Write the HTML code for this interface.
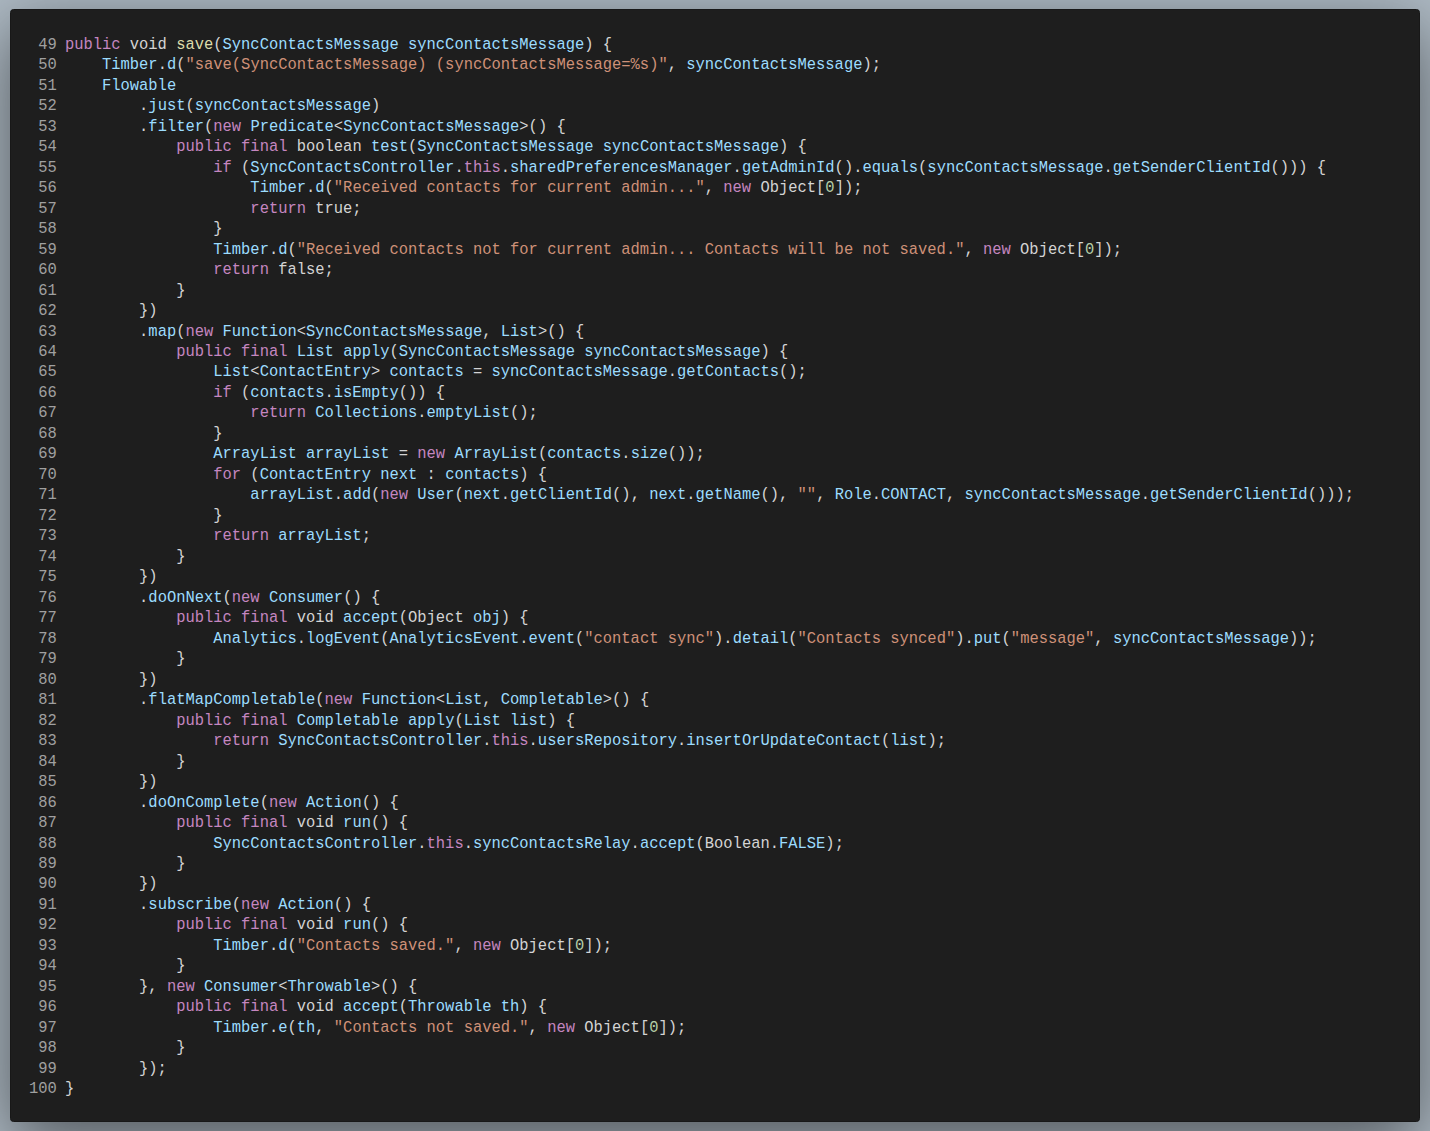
<!DOCTYPE html>
<html><head><meta charset="utf-8"><style>
html,body{margin:0;padding:0;width:1430px;height:1131px;overflow:hidden}
body{background:#aebac4;position:relative}
.p{position:absolute;left:10px;top:9px;width:1410px;height:1113px;box-sizing:border-box;background:#1e1e1e;border:1px solid #181818;border-radius:3.5px;box-shadow:0 20px 68px rgba(0,0,0,0.55)}
.code{position:absolute;left:0;top:34.8px;font-family:"Liberation Mono",monospace;font-size:15.464px;line-height:20.48px;color:#d4d4d4;white-space:pre}
.r{position:absolute;left:0;width:1400px;height:20.48px;white-space:pre;transform:scaleY(1.05);transform-origin:0 14.35px}
.g{position:absolute;left:-3.200000000000003px;width:60px;text-align:right;color:#a0a0a0}
.c{position:absolute;left:64.9px}
i{font-style:normal}
.k{color:#c586c0} .v{color:#9cdcfe} .s{color:#ce9178} .n{color:#b5cea8} .f{color:#dcdcaa}
</style></head>
<body><div class="p"></div><div class="code">
<div class="r" style="top:0.00px"><span class="g">49</span><span class="c"><i class="k">public</i> void <i class="f">save</i>(<i class="v">SyncContactsMessage</i> <i class="v">syncContactsMessage</i>) {</span></div>
<div class="r" style="top:20.48px"><span class="g">50</span><span class="c">    <i class="v">Timber</i>.<i class="v">d</i>(<i class="s">&quot;save(SyncContactsMessage) (syncContactsMessage=%s)&quot;</i>, <i class="v">syncContactsMessage</i>);</span></div>
<div class="r" style="top:40.96px"><span class="g">51</span><span class="c">    <i class="v">Flowable</i></span></div>
<div class="r" style="top:61.44px"><span class="g">52</span><span class="c">        .<i class="v">just</i>(<i class="v">syncContactsMessage</i>)</span></div>
<div class="r" style="top:81.92px"><span class="g">53</span><span class="c">        .<i class="v">filter</i>(<i class="k">new</i> <i class="v">Predicate</i>&lt;<i class="v">SyncContactsMessage</i>&gt;() {</span></div>
<div class="r" style="top:102.40px"><span class="g">54</span><span class="c">            <i class="k">public</i> <i class="k">final</i> boolean <i class="v">test</i>(<i class="v">SyncContactsMessage</i> <i class="v">syncContactsMessage</i>) {</span></div>
<div class="r" style="top:122.88px"><span class="g">55</span><span class="c">                <i class="k">if</i> (<i class="v">SyncContactsController</i>.<i class="k">this</i>.<i class="v">sharedPreferencesManager</i>.<i class="v">getAdminId</i>().<i class="v">equals</i>(<i class="v">syncContactsMessage</i>.<i class="v">getSenderClientId</i>())) {</span></div>
<div class="r" style="top:143.36px"><span class="g">56</span><span class="c">                    <i class="v">Timber</i>.<i class="v">d</i>(<i class="s">&quot;Received contacts for current admin...&quot;</i>, <i class="k">new</i> Object[<i class="n">0</i>]);</span></div>
<div class="r" style="top:163.84px"><span class="g">57</span><span class="c">                    <i class="k">return</i> true;</span></div>
<div class="r" style="top:184.32px"><span class="g">58</span><span class="c">                }</span></div>
<div class="r" style="top:204.80px"><span class="g">59</span><span class="c">                <i class="v">Timber</i>.<i class="v">d</i>(<i class="s">&quot;Received contacts not for current admin... Contacts will be not saved.&quot;</i>, <i class="k">new</i> Object[<i class="n">0</i>]);</span></div>
<div class="r" style="top:225.28px"><span class="g">60</span><span class="c">                <i class="k">return</i> false;</span></div>
<div class="r" style="top:245.76px"><span class="g">61</span><span class="c">            }</span></div>
<div class="r" style="top:266.24px"><span class="g">62</span><span class="c">        })</span></div>
<div class="r" style="top:286.72px"><span class="g">63</span><span class="c">        .<i class="v">map</i>(<i class="k">new</i> <i class="v">Function</i>&lt;<i class="v">SyncContactsMessage</i>, <i class="v">List</i>&gt;() {</span></div>
<div class="r" style="top:307.20px"><span class="g">64</span><span class="c">            <i class="k">public</i> <i class="k">final</i> <i class="v">List</i> <i class="v">apply</i>(<i class="v">SyncContactsMessage</i> <i class="v">syncContactsMessage</i>) {</span></div>
<div class="r" style="top:327.68px"><span class="g">65</span><span class="c">                <i class="v">List</i>&lt;<i class="v">ContactEntry</i>&gt; <i class="v">contacts</i> = <i class="v">syncContactsMessage</i>.<i class="v">getContacts</i>();</span></div>
<div class="r" style="top:348.16px"><span class="g">66</span><span class="c">                <i class="k">if</i> (<i class="v">contacts</i>.<i class="v">isEmpty</i>()) {</span></div>
<div class="r" style="top:368.64px"><span class="g">67</span><span class="c">                    <i class="k">return</i> <i class="v">Collections</i>.<i class="v">emptyList</i>();</span></div>
<div class="r" style="top:389.12px"><span class="g">68</span><span class="c">                }</span></div>
<div class="r" style="top:409.60px"><span class="g">69</span><span class="c">                <i class="v">ArrayList</i> <i class="v">arrayList</i> = <i class="k">new</i> <i class="v">ArrayList</i>(<i class="v">contacts</i>.<i class="v">size</i>());</span></div>
<div class="r" style="top:430.08px"><span class="g">70</span><span class="c">                <i class="k">for</i> (<i class="v">ContactEntry</i> <i class="v">next</i> : <i class="v">contacts</i>) {</span></div>
<div class="r" style="top:450.56px"><span class="g">71</span><span class="c">                    <i class="v">arrayList</i>.<i class="v">add</i>(<i class="k">new</i> <i class="v">User</i>(<i class="v">next</i>.<i class="v">getClientId</i>(), <i class="v">next</i>.<i class="v">getName</i>(), <i class="s">&quot;&quot;</i>, <i class="v">Role</i>.<i class="v">CONTACT</i>, <i class="v">syncContactsMessage</i>.<i class="v">getSenderClientId</i>()));</span></div>
<div class="r" style="top:471.04px"><span class="g">72</span><span class="c">                }</span></div>
<div class="r" style="top:491.52px"><span class="g">73</span><span class="c">                <i class="k">return</i> <i class="v">arrayList</i>;</span></div>
<div class="r" style="top:512.00px"><span class="g">74</span><span class="c">            }</span></div>
<div class="r" style="top:532.48px"><span class="g">75</span><span class="c">        })</span></div>
<div class="r" style="top:552.96px"><span class="g">76</span><span class="c">        .<i class="v">doOnNext</i>(<i class="k">new</i> <i class="v">Consumer</i>() {</span></div>
<div class="r" style="top:573.44px"><span class="g">77</span><span class="c">            <i class="k">public</i> <i class="k">final</i> void <i class="v">accept</i>(Object <i class="v">obj</i>) {</span></div>
<div class="r" style="top:593.92px"><span class="g">78</span><span class="c">                <i class="v">Analytics</i>.<i class="v">logEvent</i>(<i class="v">AnalyticsEvent</i>.<i class="v">event</i>(<i class="s">&quot;contact sync&quot;</i>).<i class="v">detail</i>(<i class="s">&quot;Contacts synced&quot;</i>).<i class="v">put</i>(<i class="s">&quot;message&quot;</i>, <i class="v">syncContactsMessage</i>));</span></div>
<div class="r" style="top:614.40px"><span class="g">79</span><span class="c">            }</span></div>
<div class="r" style="top:634.88px"><span class="g">80</span><span class="c">        })</span></div>
<div class="r" style="top:655.36px"><span class="g">81</span><span class="c">        .<i class="v">flatMapCompletable</i>(<i class="k">new</i> <i class="v">Function</i>&lt;<i class="v">List</i>, <i class="v">Completable</i>&gt;() {</span></div>
<div class="r" style="top:675.84px"><span class="g">82</span><span class="c">            <i class="k">public</i> <i class="k">final</i> <i class="v">Completable</i> <i class="v">apply</i>(<i class="v">List</i> <i class="v">list</i>) {</span></div>
<div class="r" style="top:696.32px"><span class="g">83</span><span class="c">                <i class="k">return</i> <i class="v">SyncContactsController</i>.<i class="k">this</i>.<i class="v">usersRepository</i>.<i class="v">insertOrUpdateContact</i>(<i class="v">list</i>);</span></div>
<div class="r" style="top:716.80px"><span class="g">84</span><span class="c">            }</span></div>
<div class="r" style="top:737.28px"><span class="g">85</span><span class="c">        })</span></div>
<div class="r" style="top:757.76px"><span class="g">86</span><span class="c">        .<i class="v">doOnComplete</i>(<i class="k">new</i> <i class="v">Action</i>() {</span></div>
<div class="r" style="top:778.24px"><span class="g">87</span><span class="c">            <i class="k">public</i> <i class="k">final</i> void <i class="v">run</i>() {</span></div>
<div class="r" style="top:798.72px"><span class="g">88</span><span class="c">                <i class="v">SyncContactsController</i>.<i class="k">this</i>.<i class="v">syncContactsRelay</i>.<i class="v">accept</i>(Boolean.<i class="v">FALSE</i>);</span></div>
<div class="r" style="top:819.20px"><span class="g">89</span><span class="c">            }</span></div>
<div class="r" style="top:839.68px"><span class="g">90</span><span class="c">        })</span></div>
<div class="r" style="top:860.16px"><span class="g">91</span><span class="c">        .<i class="v">subscribe</i>(<i class="k">new</i> <i class="v">Action</i>() {</span></div>
<div class="r" style="top:880.64px"><span class="g">92</span><span class="c">            <i class="k">public</i> <i class="k">final</i> void <i class="v">run</i>() {</span></div>
<div class="r" style="top:901.12px"><span class="g">93</span><span class="c">                <i class="v">Timber</i>.<i class="v">d</i>(<i class="s">&quot;Contacts saved.&quot;</i>, <i class="k">new</i> Object[<i class="n">0</i>]);</span></div>
<div class="r" style="top:921.60px"><span class="g">94</span><span class="c">            }</span></div>
<div class="r" style="top:942.08px"><span class="g">95</span><span class="c">        }, <i class="k">new</i> <i class="v">Consumer</i>&lt;<i class="v">Throwable</i>&gt;() {</span></div>
<div class="r" style="top:962.56px"><span class="g">96</span><span class="c">            <i class="k">public</i> <i class="k">final</i> void <i class="v">accept</i>(<i class="v">Throwable</i> <i class="v">th</i>) {</span></div>
<div class="r" style="top:983.04px"><span class="g">97</span><span class="c">                <i class="v">Timber</i>.<i class="v">e</i>(<i class="v">th</i>, <i class="s">&quot;Contacts not saved.&quot;</i>, <i class="k">new</i> Object[<i class="n">0</i>]);</span></div>
<div class="r" style="top:1003.52px"><span class="g">98</span><span class="c">            }</span></div>
<div class="r" style="top:1024.00px"><span class="g">99</span><span class="c">        });</span></div>
<div class="r" style="top:1044.48px"><span class="g">100</span><span class="c">}</span></div>
</div></body></html>
